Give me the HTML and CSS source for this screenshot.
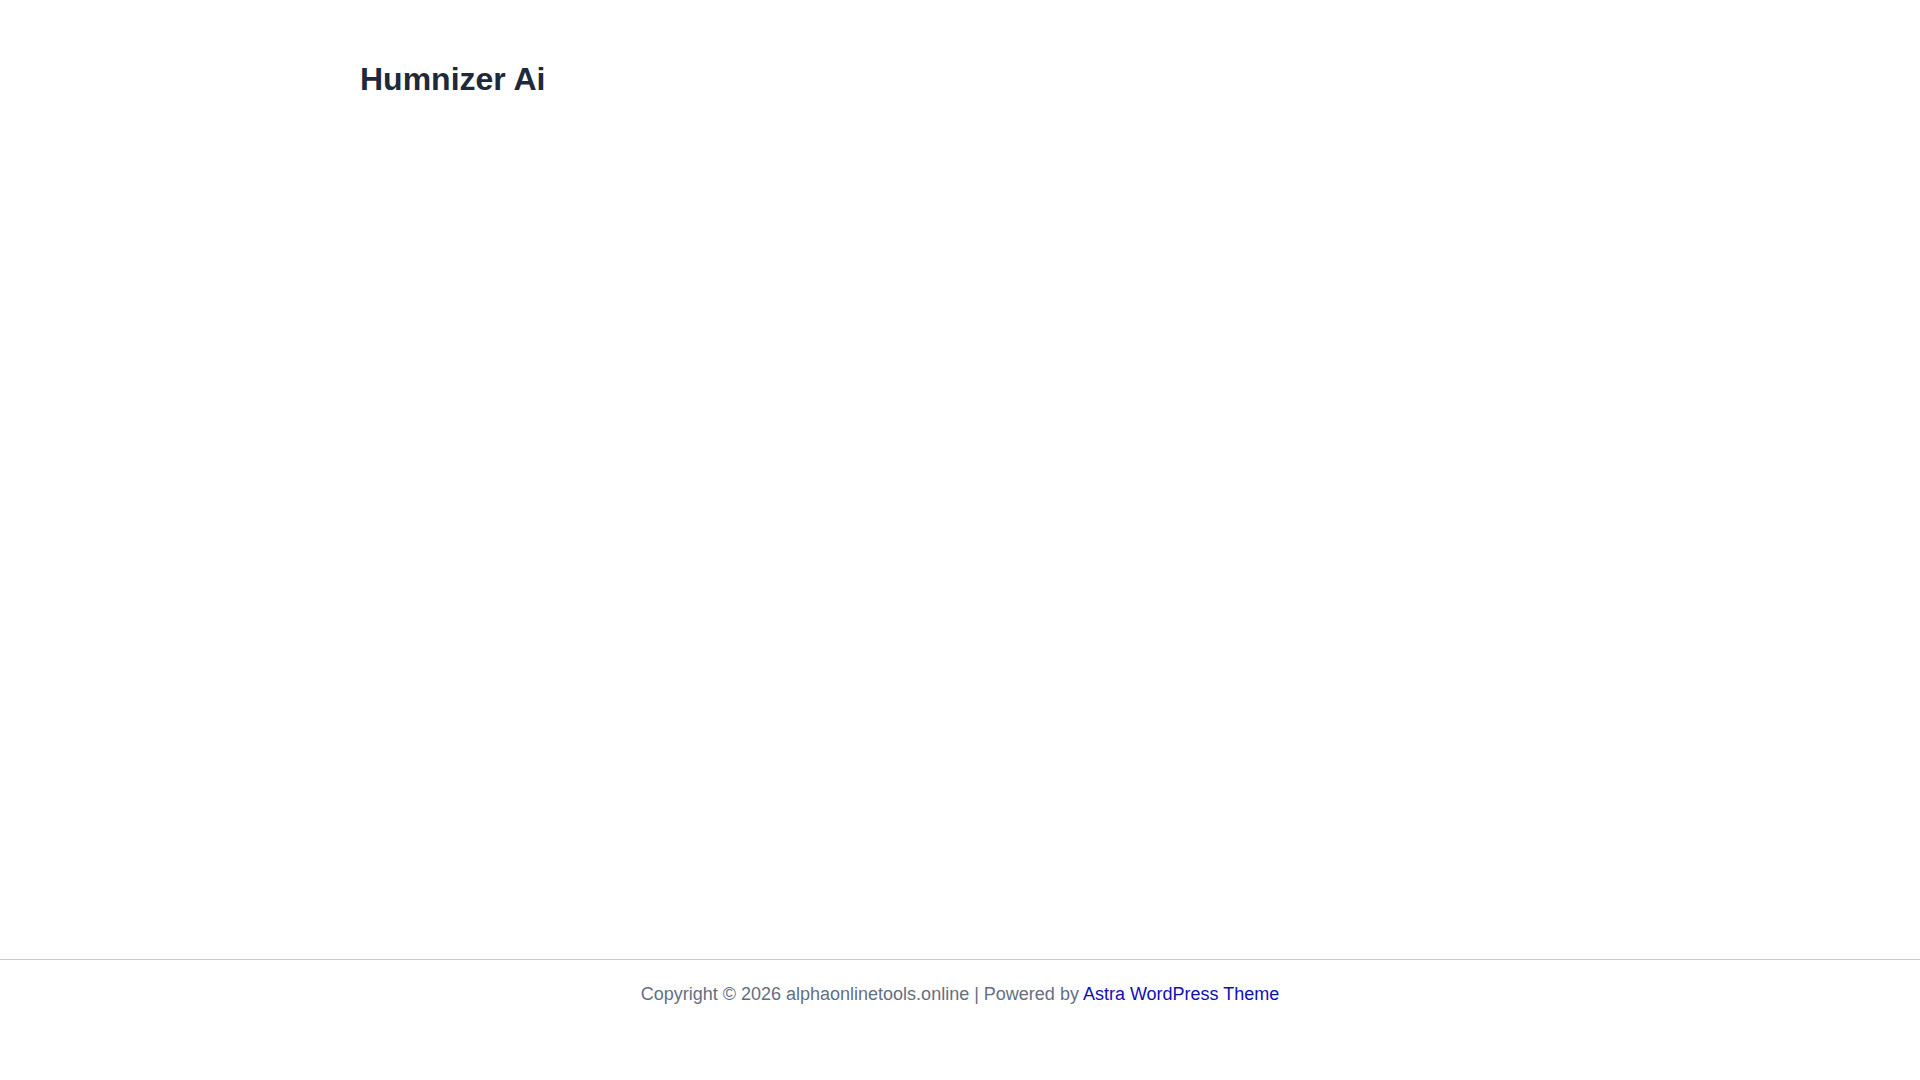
FILE: index.html
```html
<!DOCTYPE html>
<html lang="en">
<head>
<meta charset="utf-8">
<title>Humnizer Ai</title>
<link rel="stylesheet" href="styles.css">
</head>
<body>
<div class="page">
  <header class="site-header">
    <div class="container">
      <span class="site-title">Humnizer Ai</span>
    </div>
  </header>
  <main class="site-main"></main>
  <footer class="site-footer">
    <div class="footer-inner">
      Copyright © 2026 alphaonlinetools.online | Powered by <a class="footer-link" href="#">Astra WordPress Theme</a>
    </div>
  </footer>
</div>
</body>
</html>
```

FILE: styles.css
```css
html, body {
  margin: 0;
  padding: 0;
  background: #ffffff;
}
body {
  font-family: "Liberation Sans", Arial, sans-serif;
}
.page {
  display: flex;
  flex-direction: column;
  min-height: 100vh;
}
.container {
  max-width: 1200px;
  margin: 0 auto;
  padding: 0 20px;
}
.site-header {
  padding-top: 60px;
}
.site-title {
  display: block;
  font-size: 32px;
  line-height: 38px;
  font-weight: 700;
  color: #1e293b;
}
.site-main {
  flex: 1;
}
.site-footer {
  border-top: 1px solid #f9c966;
  height: 120px;
  box-sizing: content-box;
}
.footer-inner {
  padding-top: 19px;
  text-align: center;
  font-size: 18px;
  line-height: 30px;
  color: #646e82;
}
.footer-link {
  color: #1010b4;
  text-decoration: none;
}
```
